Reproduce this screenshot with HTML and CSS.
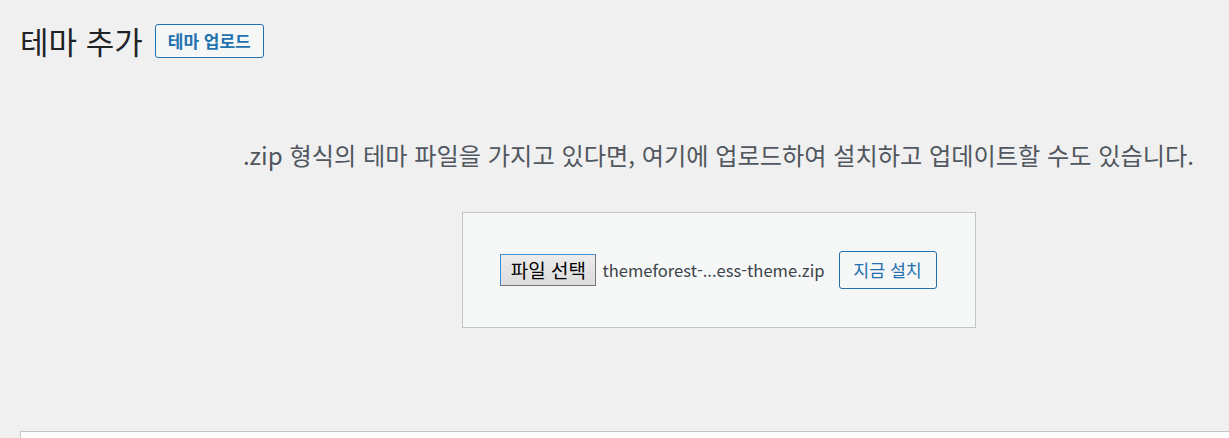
FILE: index.html
```html
<!DOCTYPE html>
<html lang="ko">
<head>
<meta charset="utf-8">
<title>테마 추가</title>
<link rel="stylesheet" href="styles.css">
</head>
<body>
<div class="wrap">
  <div class="head">
    <h1 class="title">테마 추가</h1>
    <button class="btn-upload" type="button">테마 업로드</button>
  </div>
  <div class="upload">
    <p class="help">.zip 형식의 테마 파일을 가지고 있다면, 여기에 업로드하여 설치하고 업데이트할 수도 있습니다.</p>
    <div class="form">
      <button class="file-btn" type="button">파일 선택</button>
      <span class="file-name">themeforest-...ess-theme.zip</span>
      <button class="install" type="button">지금 설치</button>
    </div>
  </div>
  <div class="panel"></div>
</div>
</body>
</html>
```
FILE: styles.css
```css
html, body {
  margin: 0;
  padding: 0;
  background: #f0f0f1;
  overflow: hidden;
  height: 438px;
}
body {
  font-family: "Noto Sans CJK KR", "Noto Sans", sans-serif;
  color: #3c434a;
}
.wrap {
  padding-left: 20px;
}
.head {
  display: flex;
  align-items: center;
  gap: 12px;
  padding-top: 24px;
  height: 34px;
}
.title {
  margin: 0;
  font-size: 31px;
  font-weight: 400;
  line-height: 34px;
  color: #1d2327;
}
.btn-upload {
  width: 109px;
  height: 34px;
  padding: 0;
  border: 1px solid #2271b1;
  border-radius: 3px;
  background: #f6f7f7;
  color: #2271b1;
  font-family: inherit;
  font-size: 17px;
  font-weight: 600;
  line-height: 32px;
}
.upload {
  margin-left: 208px;
  margin-right: 20px;
  text-align: center;
}
.help {
  margin: 82px 0 42px;
  font-size: 24.2px;
  line-height: 30px;
  color: #50575e;
  white-space: nowrap;
}
.form {
  width: 512px;
  height: 114px;
  margin: 0 auto;
  border: 1px solid #c3c4c7;
  background: #f6f7f7;
  display: flex;
  align-items: center;
  justify-content: center;
}
.file-btn {
  width: 96px;
  height: 32px;
  padding: 0;
  border: 1px solid #767676;
  border-top-color: #3a8fd6;
  border-left-color: #3a8fd6;
  background: linear-gradient(#ececec, #dcdcdc);
  color: #000;
  font-family: inherit;
  font-size: 19px;
  line-height: 28px;
}
.file-name {
  margin-left: 6px;
  font-size: 16.6px;
  color: #3c434a;
}
.install {
  margin-left: 14px;
  width: 98px;
  height: 38px;
  padding: 0;
  border: 1px solid #2271b1;
  border-radius: 3px;
  background: #f6f7f7;
  color: #2271b1;
  font-family: inherit;
  font-size: 17.3px;
  line-height: 36px;
}
.panel {
  margin-top: 103px;
  height: 6px;
  background: #fff;
  border-top: 1px solid #c3c4c7;
  border-left: 1px solid #c3c4c7;
}
```
